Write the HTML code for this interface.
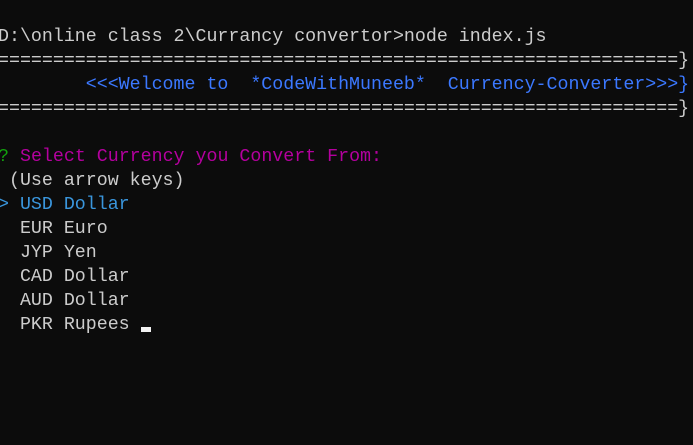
<!DOCTYPE html>
<html><head><style>
html,body{margin:0;padding:0;background:#0c0c0c;width:693px;height:445px;overflow:hidden}
pre{position:absolute;left:-2px;top:25px;margin:0;font-family:"Liberation Mono",monospace;font-size:18.3px;line-height:24px;color:#cccccc;white-space:pre}
.b{color:#3b78ff}.m{color:#b4009e}.g{color:#13a10e}.c{color:#3a96dd}
.cur{display:inline-block;width:10px;height:5px;background:#f2f2f2;vertical-align:-3px}
</style></head><body>
<pre>D:\online class 2\Currancy convertor&gt;node index.js
==============================================================}
        <span class="b">&lt;&lt;&lt;Welcome to  *CodeWithMuneeb*  Currency-Converter&gt;&gt;&gt;}</span>
==============================================================}

<span class="g">?</span> <span class="m">Select Currency you Convert From:</span>
 (Use arrow keys)
<span class="c">&gt; USD Dollar</span>
  EUR Euro
  JYP Yen
  CAD Dollar
  AUD Dollar
  PKR Rupees <span class="cur"></span></pre>
</body></html>
